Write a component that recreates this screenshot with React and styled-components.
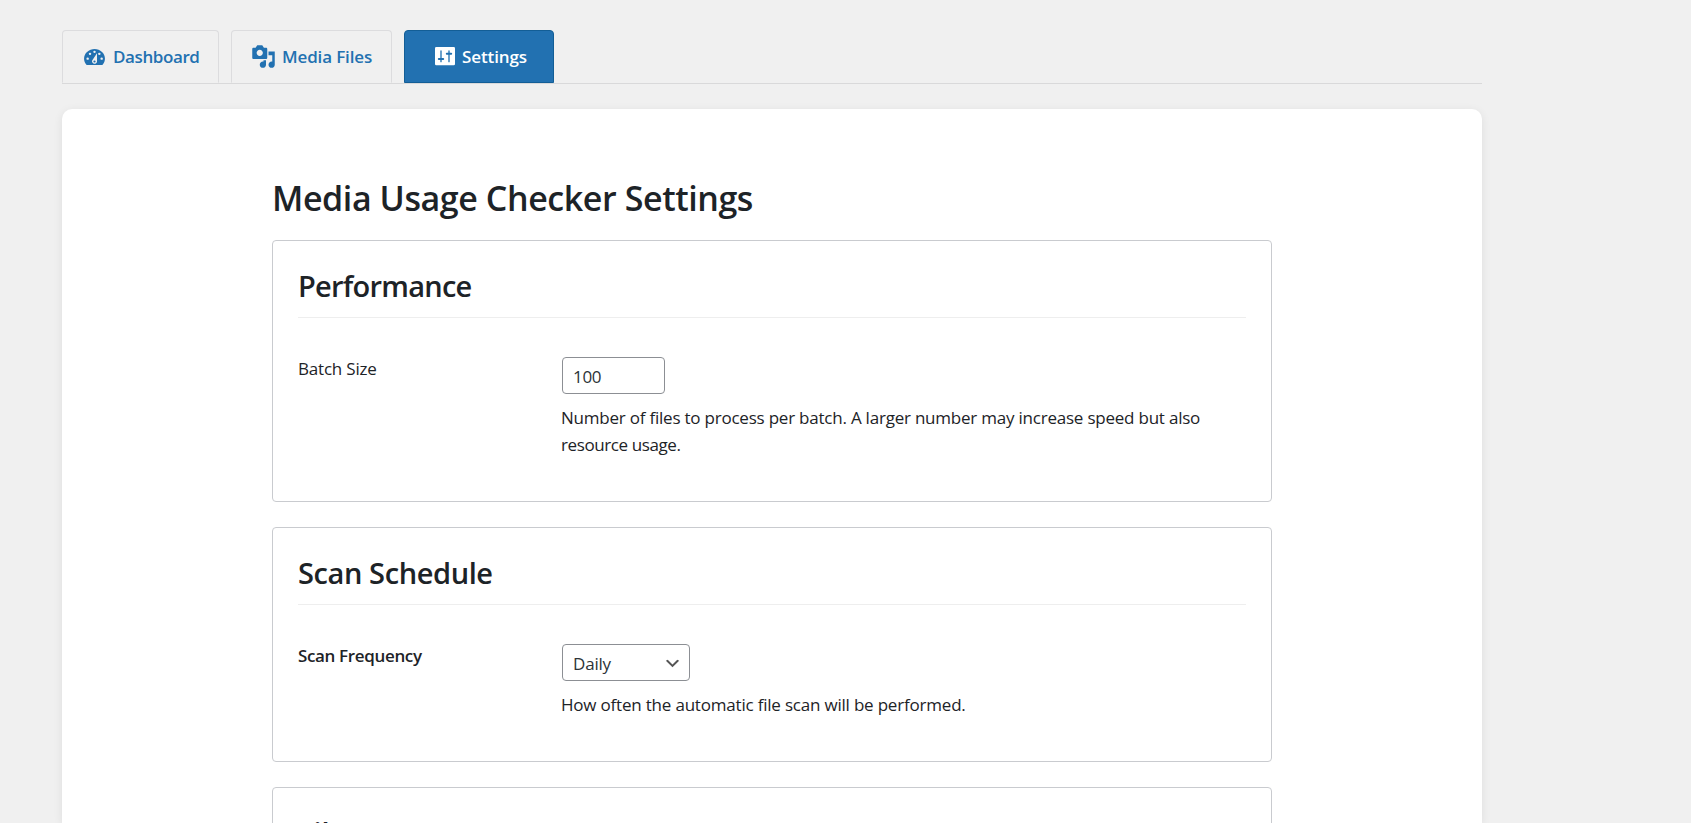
import React from "react";
import styled, { createGlobalStyle } from "styled-components";

const Global = createGlobalStyle`
  *, *::before, *::after { box-sizing: border-box; }
  html { height: 100%; overflow: hidden; background: #f0f0f0; }
  body { margin: 0; height: 100%; overflow: hidden; background: #f0f0f0; color: #1d2327; font-family: "Open Sans", "Noto Sans", sans-serif; }
`;

const Page = styled.div`
  display: flex;
  flex-direction: column;
  width: 1544px;
  height: 100vh;
  padding: 30px 62px 0;
  overflow: hidden;
`;

const Text = styled.span`
  display: block;
  white-space: nowrap;
  letter-spacing: ${(p) => p.$ls || 0}px;
`;

const Tabs = styled.nav`
  display: flex;
  flex: none;
  gap: 12px;
  height: 54px;
  border-bottom: 1px solid #d9d9da;
`;

const Tab = styled.a`
  display: flex;
  align-items: center;
  width: ${(p) => p.$w}px;
  height: 53px;
  padding-left: ${(p) => p.$pad}px;
  gap: ${(p) => p.$gap}px;
  border: 1px solid ${(p) => (p.$active ? "#135e96" : "#dcdcde")};
  border-bottom-color: ${(p) => (p.$active ? "#135e96" : "transparent")};
  border-radius: 4px 4px 0 0;
  background: ${(p) => (p.$active ? "#2271b1" : "#f0f0f0")};
  color: ${(p) => (p.$active ? "#fff" : "#2271b1")};
  font-size: 17px;
  font-weight: 600;
  white-space: nowrap;
  svg { flex: none; fill: currentColor; }
`;

const Panel = styled.main`
  flex: 1;
  min-height: 0;
  margin-top: 25px;
  padding: 64px 210px 0;
  background: #fff;
  border-radius: 10px 10px 0 0;
  box-shadow: 0 2px 10px rgba(0, 0, 0, 0.08);
`;

const Title = styled.h1`
  margin: 0;
  height: 67px;
  line-height: 50px;
  font-size: 34px;
  font-weight: 600;
`;

const Card = styled.section`
  height: ${(p) => p.$h}px;
  margin-bottom: 25px;
  padding: 25px;
  border: 1px solid #c9cbcf;
  border-radius: 4px;
`;

const CardTitle = styled.h2`
  margin: 0;
  height: 52px;
  line-height: 40px;
  border-bottom: 1px solid #eee;
  font-size: 29px;
  font-weight: 600;
`;

const Row = styled.div`
  display: grid;
  grid-template-columns: 263px 1fr;
  padding-top: 39px;
`;

const Label = styled.label`
  line-height: 24px;
  font-size: 17px;
  font-weight: ${(p) => (p.$bold ? 600 : 400)};
`;

const Control = styled.div`
  display: flex;
  align-items: center;
  justify-content: space-between;
  width: ${(p) => p.$w}px;
  height: 37px;
  margin-left: 1px;
  padding: 2px 7px 0 10px;
  border: 1px solid #8c8f94;
  border-radius: 4px;
  color: #2c3338;
  font-size: 17px;
`;

const Help = styled.p`
  margin: 10px 0 0;
  line-height: 27px;
  font-size: 17px;
`;

const DashboardIcon = () => (
  <svg width="21" height="16" viewBox="12 24 63 48">
    <path d="M20 72C8 59 11 42 21 33C34 21 54 21 66 33C76 42 79 59 67 72Z" />
    <g fill="#f0f0f0">
      <circle cx="43.500" cy="32.500" r="3.600" />
      <circle cx="30" cy="38.500" r="3.600" />
      <circle cx="58" cy="38.500" r="3.600" />
      <circle cx="23" cy="53" r="3.600" />
      <circle cx="65" cy="53" r="3.600" />
      <path d="M51 37V62A7.500 7.500 0 1 1 38 56Z" />
    </g>
    <circle cx="43.500" cy="61.500" r="3.300" />
  </svg>
);

const MediaIcon = () => (
  <svg width="25" height="25" viewBox="0 0 20 20">
    <path d="M13 11V4c0-.55-.45-1-1-1h-1.67L9 1H5L3.67 3H2c-.55 0-1 .45-1 1v7c0 .55.45 1 1 1h10c.55 0 1-.45 1-1zM7 4.5c1.38 0 2.5 1.12 2.5 2.5S8.38 9.5 7 9.5 4.5 8.38 4.5 7 5.62 4.5 7 4.5zM14 6h5v10.5c0 1.38-1.12 2.5-2.5 2.5S14 17.88 14 16.5s1.12-2.5 2.5-2.5c.17 0 .34.02.5.05V9h-3V6zm-4 8.05V13h2v3.5c0 1.38-1.12 2.5-2.5 2.5S7 17.88 7 16.5 8.12 14 9.5 14c.17 0 .34.02.5.05z" fillRule="evenodd" />
  </svg>
);

const SettingsIcon = () => (
  <svg width="20" height="20" viewBox="0 0 60 60">
    <rect width="60" height="55" rx="4" />
    <g fill="#2271b1">
      <rect x="16" y="10" width="4" height="36" rx="2" />
      <rect x="8.500" y="33" width="19" height="6" rx="3" />
      <rect x="40" y="10" width="4" height="36" rx="2" />
      <rect x="32.500" y="17" width="19" height="6" rx="3" />
    </g>
  </svg>
);

const Chevron = () => (
  <svg width="19" height="19" viewBox="0 0 20 20">
    <path d="M5 6l5 5 5-5 2 1-7 7-7-7 2-1z" fill="#555" />
  </svg>
);

export default function App() {
  return (
    <>
      <Global />
      <Page>
        <Tabs>
          <Tab $w={157} $pad={21} $gap={8}><DashboardIcon /><Text $ls={-0.4}>Dashboard</Text></Tab>
          <Tab $w={161} $pad={19} $gap={6}><MediaIcon /><Text $ls={-0.15}>Media Files</Text></Tab>
          <Tab $active $w={150} $pad={30} $gap={7}><SettingsIcon /><Text $ls={-0.1}>Settings</Text></Tab>
        </Tabs>
        <Panel>
          <Title><Text $ls={-0.42}>Media Usage Checker Settings</Text></Title>
          <Card $h={262}>
            <CardTitle><Text $ls={-0.75}>Performance</Text></CardTitle>
            <Row>
              <Label><Text $ls={-0.2}>Batch Size</Text></Label>
              <div>
                <Control $w={103}><Text $ls={-0.3}>100</Text></Control>
                <Help>
                  <Text $ls={-0.22}>Number of files to process per batch. A larger number may increase speed but also</Text>
                  <Text $ls={-0.4}>resource usage.</Text>
                </Help>
              </div>
            </Row>
          </Card>
          <Card $h={235}>
            <CardTitle><Text $ls={-0.4}>Scan Schedule</Text></CardTitle>
            <Row>
              <Label $bold><Text $ls={-0.35}>Scan Frequency</Text></Label>
              <div>
                <Control $w={128}><Text $ls={-0.2}>Daily</Text><Chevron /></Control>
                <Help><Text $ls={-0.2}>How often the automatic file scan will be performed.</Text></Help>
              </div>
            </Row>
          </Card>
          <Card $h={235}>
            <CardTitle><Text>File</Text></CardTitle>
          </Card>
        </Panel>
      </Page>
    </>
  );
}
